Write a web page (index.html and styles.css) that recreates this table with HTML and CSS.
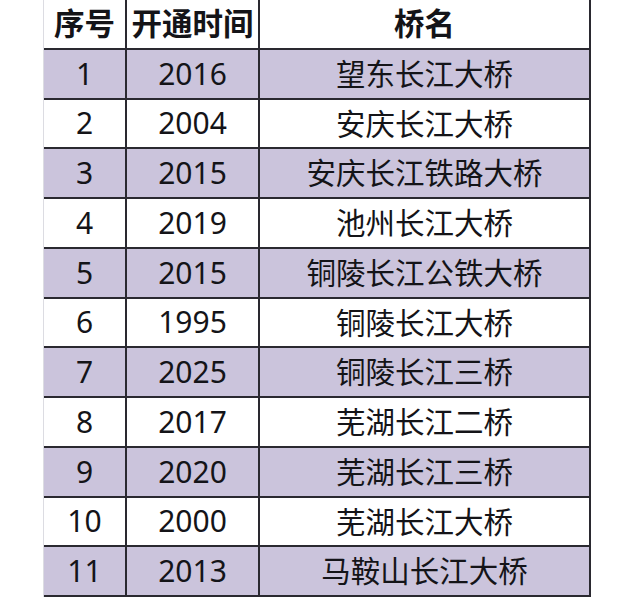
FILE: index.html
```html
<!DOCTYPE html>
<html lang="zh">
<head>
<meta charset="utf-8">
<link rel="stylesheet" href="styles.css">
</head>
<body>
<div class="sheet">
  <div class="cell head">序号</div><div class="cell head">开通时间</div><div class="cell head">桥名</div>
  <div class="cell num alt">1</div><div class="cell num alt">2016</div><div class="cell alt">望东长江大桥</div>
  <div class="cell num">2</div><div class="cell num">2004</div><div class="cell">安庆长江大桥</div>
  <div class="cell num alt">3</div><div class="cell num alt">2015</div><div class="cell alt">安庆长江铁路大桥</div>
  <div class="cell num">4</div><div class="cell num">2019</div><div class="cell">池州长江大桥</div>
  <div class="cell num alt">5</div><div class="cell num alt">2015</div><div class="cell alt">铜陵长江公铁大桥</div>
  <div class="cell num">6</div><div class="cell num">1995</div><div class="cell">铜陵长江大桥</div>
  <div class="cell num alt">7</div><div class="cell num alt">2025</div><div class="cell alt">铜陵长江三桥</div>
  <div class="cell num">8</div><div class="cell num">2017</div><div class="cell">芜湖长江二桥</div>
  <div class="cell num alt">9</div><div class="cell num alt">2020</div><div class="cell alt">芜湖长江三桥</div>
  <div class="cell num">10</div><div class="cell num">2000</div><div class="cell">芜湖长江大桥</div>
  <div class="cell num alt">11</div><div class="cell num alt">2013</div><div class="cell alt">马鞍山长江大桥</div>
</div>
</body>
</html>
```
FILE: styles.css
```css
html, body {
  margin: 0;
  padding: 0;
  background: #ffffff;
}
body {
  font-family: "Noto Sans", "Noto Sans CJK SC", sans-serif;
  color: #141418;
}
.sheet {
  display: grid;
  grid-template-columns: 83px 133px 331px;
  margin-left: 43px;
  width: 547px;
  border-left: 1px solid #dcdce2;
}
.cell {
  box-sizing: border-box;
  height: 49.75px;
  border-right: 2px solid #2a2930;
  border-bottom: 2px solid #2a2930;
  display: flex;
  align-items: center;
  justify-content: center;
  font-size: 29.5px;
  line-height: 1;
  white-space: nowrap;
  background: #ffffff;
}
.num {
  font-size: 30px;
}
.head {
  font-weight: 700;
  font-size: 30.5px;
  padding-bottom: 2px;
}
.alt {
  background: #cbc4dc;
}
```
